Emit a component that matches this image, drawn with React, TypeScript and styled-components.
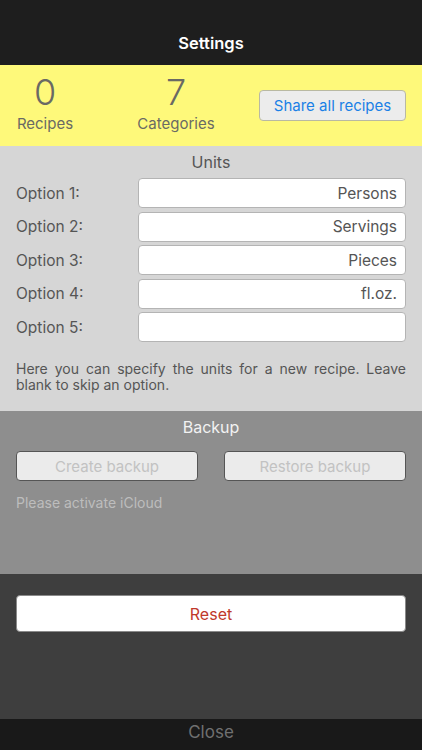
import React from 'react';
import styled, { createGlobalStyle } from 'styled-components';

const GlobalStyle = createGlobalStyle`
    html, body {
        margin: 0;
        padding: 0;
        background: #191919;
    }
    * {
        box-sizing: border-box;
    }
    body {
        font-family: Inter, 'Liberation Sans', sans-serif;
    }
`;

const units = ['Persons', 'Servings', 'Pieces', 'fl.oz.', ''];

const App: React.FC = () => {
    return (
        <Screen>
            <GlobalStyle />
            <Header>Settings</Header>
            <Stats>
                <Stat>
                    <Count>0</Count>
                    <StatLabel>Recipes</StatLabel>
                </Stat>
                <Stat>
                    <Count>7</Count>
                    <StatLabel>Categories</StatLabel>
                </Stat>
                <ShareButton>Share all recipes</ShareButton>
            </Stats>
            <Units>
                <SectionTitle>Units</SectionTitle>
                <OptionList>
                    {units.map((unit, i) => (
                        <OptionRow key={i}>
                            <OptionLabel>Option {i + 1}:</OptionLabel>
                            <OptionInput>{unit}</OptionInput>
                        </OptionRow>
                    ))}
                </OptionList>
                <Help>
                    Here you can specify the units for a new recipe. Leave blank to skip an option.
                </Help>
            </Units>
            <Backup>
                <SectionTitle light>Backup</SectionTitle>
                <BackupButtons>
                    <DisabledButton>Create backup</DisabledButton>
                    <DisabledButton>Restore backup</DisabledButton>
                </BackupButtons>
                <Hint>Please activate iCloud</Hint>
            </Backup>
            <Danger>
                <ResetButton>Reset</ResetButton>
            </Danger>
            <Footer>Close</Footer>
        </Screen>
    );
};

const Screen = styled.div`
    width: 422px;
    height: 750px;
    display: flex;
    flex-direction: column;
    overflow: hidden;
`;

const Header = styled.div`
    height: 65px;
    background: #1e1e1e;
    color: #ffffff;
    font-weight: 600;
    font-size: 16.5px;
    display: flex;
    align-items: flex-end;
    justify-content: center;
    padding-bottom: 12px;
`;

const Stats = styled.div`
    height: 81px;
    background: #fef97a;
    display: grid;
    grid-template-columns: 90px 172px 1fr;
    align-items: center;
    padding-right: 16px;
`;

const Stat = styled.div`
    display: flex;
    flex-direction: column;
    align-items: center;
    color: #6a6a64;
`;

const Count = styled.div`
    font-size: 36px;
    font-weight: 300;
    line-height: 40px;
    margin-top: -6px;
`;

const StatLabel = styled.div`
    font-size: 15px;
    line-height: 20px;
    margin-top: 2px;
`;

const ShareButton = styled.div`
    height: 31px;
    margin-left: -3px;
    background: #ececec;
    border: 1px solid #b9b9a2;
    border-radius: 4px;
    color: #1a80e6;
    font-size: 15px;
    display: flex;
    align-items: center;
    justify-content: center;
`;

const Units = styled.div`
    height: 265px;
    background: #d6d6d6;
    padding: 5px 16px 0;
`;

const SectionTitle = styled.div<{ light?: boolean }>`
    text-align: center;
    font-size: 16px;
    line-height: 22px;
    color: ${(p) => (p.light ? '#f2f2f2' : '#555555')};
`;

const OptionList = styled.div`
    display: flex;
    flex-direction: column;
    gap: 3.5px;
    margin-top: 5px;
`;

const OptionRow = styled.div`
    display: grid;
    grid-template-columns: 122px 1fr;
    align-items: center;
`;

const OptionLabel = styled.div`
    font-size: 15.5px;
    color: #555555;
`;

const OptionInput = styled.div`
    height: 30px;
    background: #ffffff;
    border: 1px solid #b4b4b4;
    border-radius: 4px;
    padding: 0 8px;
    display: flex;
    align-items: center;
    justify-content: flex-end;
    font-size: 15.5px;
    color: #555555;
`;

const Help = styled.p`
    margin: 19px 0 0;
    font-size: 14px;
    line-height: 16px;
    color: #555555;
    text-align: justify;
`;

const Backup = styled.div`
    height: 163px;
    background: #8e8e8e;
    padding: 5px 16px 0;
`;

const BackupButtons = styled.div`
    display: grid;
    grid-template-columns: 1fr 1fr;
    gap: 26px;
    margin-top: 13px;
`;

const DisabledButton = styled.div`
    height: 30px;
    background: #ebebeb;
    border: 1px solid #555555;
    border-radius: 4px;
    color: #c2c2c2;
    font-size: 15px;
    display: flex;
    align-items: center;
    justify-content: center;
`;

const Hint = styled.div`
    margin-top: 13px;
    font-size: 14px;
    color: #bdbdbd;
`;

const Danger = styled.div`
    flex: 1;
    background: #3e3e3e;
    padding: 21px 16px 0;
`;

const ResetButton = styled.div`
    height: 37px;
    background: #ffffff;
    border: 1px solid #8a8a8a;
    border-radius: 4px;
    color: #c0392b;
    font-size: 16px;
    display: flex;
    align-items: center;
    justify-content: center;
`;

const Footer = styled.div`
    height: 31px;
    background: #191919;
    color: #707070;
    font-size: 17px;
    display: flex;
    align-items: flex-start;
    justify-content: center;
    padding-top: 3px;
`;

export default App;
